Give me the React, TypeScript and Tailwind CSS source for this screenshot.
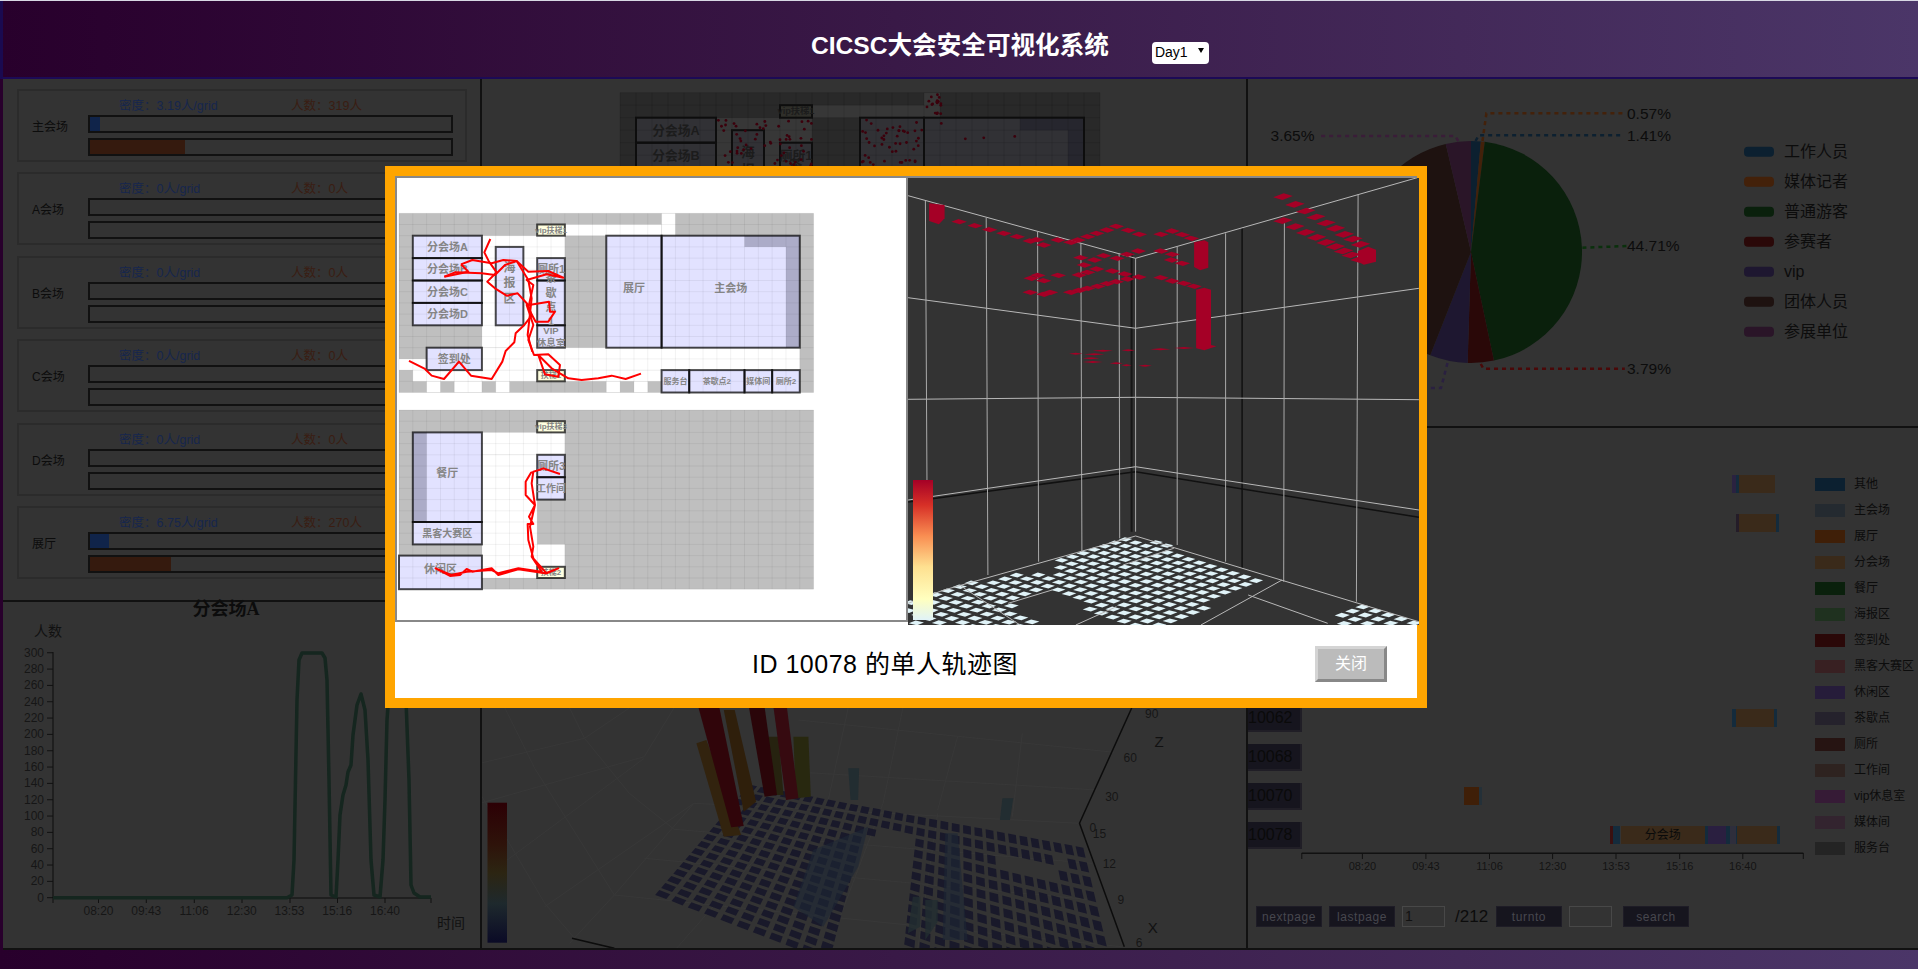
type Pt = [number, number];
type Room = { t: string; c: number[]; fs?: number; dy?: number; kind?: 'lift' };

// zoom crops mapped back onto page pixels, so drawings can be read straight off the picture
const modal3d = (x: number, y: number): Pt => [900 + x / 2.958, 165 + y / 3];
const modalFloor = (x: number, y: number): Pt => [900 + x / 2.958, 440 + y / 3];
const chart3d = (x: number, y: number): Pt => [480 + x / 2.01, 700 + y / 3];
const str = (pts: Pt[]) => pts.map((p) => `${p[0].toFixed(1)},${p[1].toFixed(1)}`).join(' ');
const mapPts = (fn: (x: number, y: number) => Pt, a: number[][]) => str(a.map((p) => fn(p[0], p[1])));

const inPoly = (x: number, y: number, poly: number[][]) => {
  let hit = false;
  for (let i = 0, j = poly.length - 1; i < poly.length; j = i++) {
    const [xi, yi] = poly[i];
    const [xj, yj] = poly[j];
    if (yi > y !== yj > y && x < ((xj - xi) * (y - yi)) / (yj - yi) + xi) hit = !hit;
  }
  return hit;
};

const rooms1: Room[] = [
  { t: '分会场A', c: [1, 2, 6, 4] },
  { t: '分会场B', c: [1, 4, 6, 6] },
  { t: '分会场C', c: [1, 6, 6, 8] },
  { t: '分会场D', c: [1, 8, 6, 10] },
  { t: '海\n报\n区', c: [7, 3, 9, 10], fs: 12, dy: -3 },
  { t: '厕所1', c: [10, 4, 12, 6] },
  { t: '茶\n歇\n点\n1', c: [10, 6, 12, 10], fs: 11, dy: -3 },
  { t: 'VIP\n休息室', c: [10, 10, 12, 12], fs: 9.5 },
  { t: '展厅', c: [15, 2, 19, 12], dy: -4 },
  { t: '主会场', c: [19, 2, 29, 12], dy: -4 },
  { t: '签到处', c: [2, 12, 6, 14] },
  { t: '扶梯1', c: [10, 14, 12, 15], fs: 8, kind: 'lift' },
  { t: 'vip扶梯1', c: [10, 1, 12, 2], fs: 8, kind: 'lift' },
  { t: '服务台', c: [19, 14, 21, 16], fs: 8 },
  { t: '茶歇点2', c: [21, 14, 25, 16], fs: 8 },
  { t: '媒体间', c: [25, 14, 27, 16], fs: 8 },
  { t: '厕所2', c: [27, 14, 29, 16], fs: 8 },
];
const open1 = [
  [19, 0, 20, 2], [12, 1, 19, 2], [6, 2, 12, 12], [6, 12, 29, 14], [0, 13, 2, 14], [1, 14, 19, 15],
  [2, 15, 3, 16], [4, 15, 6, 16], [7, 15, 8, 16], [15, 15, 16, 16], [17, 15, 18, 16],
];
const strips1 = [[25, 2, 29, 3], [28, 2, 29, 12]];

const rooms2: Room[] = [
  { t: '餐厅', c: [1, 2, 6, 10], dy: -4 },
  { t: '黑客大赛区', c: [1, 10, 6, 12], fs: 10 },
  { t: '休闲区', c: [0, 13, 6, 16], dy: -3 },
  { t: 'vip扶梯3', c: [10, 1, 12, 2], fs: 8, kind: 'lift' },
  { t: '厕所3', c: [10, 4, 12, 6] },
  { t: '工作间', c: [10, 6, 12, 8], fs: 10 },
  { t: '扶梯2', c: [10, 14, 12, 15], fs: 8, kind: 'lift' },
];
const open2 = [[6, 2, 12, 4], [6, 4, 10, 15], [10, 12, 12, 14]];
const strips2 = [[1, 2, 2, 10]];

const light = { gray: '#bfbfbf', open: '#ffffff', room: '#e2e2ff', strip: '#acacc8', lift: '#ffffe0', stroke: '#000000', strokeOp: 0.7, text: '#858585', grid: 'rgba(0,0,0,0.055)' };
const dim = { gray: '#292929', open: '#373737', room: '#313135', strip: '#26262e', lift: '#2f2f2a', stroke: '#0d0d0d', strokeOp: 1, text: '#1c1c1c', grid: 'rgba(0,0,0,0.1)' };

function FloorPlan({ x, y, cw, ch, rooms, open, strips, theme }: { x: number; y: number; cw: number; ch: number; rooms: Room[]; open: number[][]; strips: number[][]; theme: typeof light }) {
  const k = cw / 13.82;
  const box = (c: number[]) => ({ x: x + c[0] * cw, y: y + c[1] * ch, width: (c[2] - c[0]) * cw, height: (c[3] - c[1]) * ch });
  return (
    <g>
      <rect x={x} y={y} width={30 * cw} height={16 * ch} fill={theme.gray} />
      {open.map((c, i) => <rect key={i} {...box(c)} fill={theme.open} />)}
      {rooms.map((r) => <rect key={r.t} {...box(r.c)} fill={r.kind === 'lift' ? theme.lift : theme.room} />)}
      {strips.map((c, i) => <rect key={i} {...box(c)} fill={theme.strip} />)}
      {Array.from({ length: 31 }, (_, i) => <line key={i} x1={x + i * cw} x2={x + i * cw} y1={y} y2={y + 16 * ch} stroke={theme.grid} />)}
      {Array.from({ length: 17 }, (_, i) => <line key={i} x1={x} x2={x + 30 * cw} y1={y + i * ch} y2={y + i * ch} stroke={theme.grid} />)}
      {rooms.map((r) => <rect key={r.t} {...box(r.c)} fill="none" stroke={theme.stroke} strokeOpacity={theme.strokeOp} strokeWidth={2} />)}
      {rooms.map((r) => {
        const b = box(r.c);
        const lines = r.t.split('\n');
        const fs = (r.fs ?? 11) * k;
        const lh = lines.length === 2 ? fs * 1.25 : fs * 1.3;
        return lines.map((l, i) => (
          <text key={r.t + i} x={b.x + b.width / 2} y={b.y + b.height / 2 + (r.dy ?? 0) * k + (i - (lines.length - 1) / 2) * lh} fontSize={fs} fontWeight={700} fill={theme.text} textAnchor="middle" dominantBaseline="central">
            {l}
          </text>
        ));
      })}
    </g>
  );
}

// traces are read off the 3x crop of the modal
const trackA = '72,588 120,612 140,632 177,642 222,590 258,632 320,642 352,590 362,558 388,532 392,505 418,480 440,452 430,420 398,385 365,392 330,370 307,350 335,322 312,290 298,262 316,222';
const trackB = '228,298 262,285 320,295 355,285 395,288 430,320 490,318 535,338 485,328 425,345 445,360 432,420 492,410 495,440 510,440 490,470 452,470 425,420 445,480 430,525 447,570 490,568 525,600 520,635 480,628 460,570 500,610 550,640 590,645 640,640 680,632 722,642 768,626';
const trackC = '178,335 210,322 290,325 330,330 360,300 395,288 430,345 440,400 428,510 442,560';
const trackD = '178,335 250,320 228,298';
const trackE = '525,222 475,205 438,218 422,245 422,285 450,315 432,350 445,372 428,372 430,420 445,475 485,520 520,505 480,520 400,508 340,525 320,505 262,515 245,507 225,525 195,528 152,505 198,525 245,515 320,510 340,520 400,505 470,515 440,470 445,440 435,380 450,315 440,250 445,215 470,208';

const redTiles = [
  [175, 170], [222, 182], [265, 194], [307, 205], [347, 215], [385, 228], [405, 224], [425, 240], [467, 225], [505, 232], [527, 225], [555, 215], [582, 205], [612, 195], [640, 184], [675, 196], [708, 208], [772, 208], [805, 198], [835, 209], [862, 220],
  [535, 278], [575, 285], [603, 272], [642, 280], [672, 268], [705, 258], [772, 258], [805, 268], [803, 285], [835, 295],
  [545, 300], [555, 322], [582, 312], [628, 318], [665, 327], [707, 336], [772, 338], [805, 348], [840, 355], [870, 364],
  [408, 331], [388, 340], [425, 347], [468, 331], [530, 330], [385, 382], [425, 388], [445, 382], [505, 382], [530, 376], [555, 370], [585, 364], [612, 356], [640, 350], [672, 342],
];
const redBig = [
  [1133, 95], [1168, 118], [1200, 138], [1230, 156], [1260, 174], [1288, 190], [1314, 208], [1340, 222], [1362, 238],
  [1133, 167], [1168, 185], [1200, 202], [1232, 217], [1260, 232], [1288, 245], [1312, 258], [1335, 270], [1360, 283],
];
const redFlat = [[520, 566, 40], [575, 568, 60], [600, 557, 60], [675, 556, 40], [770, 553, 60], [840, 549, 60], [565, 580, 50], [570, 591, 60], [640, 595, 40], [670, 601, 30], [725, 602, 40]];

const zones7 = [
  [[650, 296], [760, 305], [1070, 420], [790, 560], [640, 560], [450, 440], [480, 345]],
  [[20, 490], [190, 428], [340, 405], [440, 390], [450, 445], [320, 490], [420, 560], [20, 560]],
  [[1350, 486], [1540, 540], [1540, 560], [1265, 560]],
];

function tiles7() {
  const out: string[] = [];
  for (let i = -8; i < 40; i++) {
    for (let j = -4; j < 34; j++) {
      const s = 1 + (i + j) * 0.006;
      const x = 697 + (i - j) * 30 * s;
      const y = 288 + (i * 9.5 + j * 10) * s;
      if (!zones7.some((z) => inPoly(x, y, z))) continue;
      const a = 30 * s * 0.66;
      const b = 9.7 * s * 0.66;
      out.push(mapPts(modalFloor, [[x - a, y + 1], [x - 2, y - b], [x + a, y - 1], [x + 2, y + b]]));
    }
  }
  return out;
}

function Modal3D() {
  const wall = [
    [[24, 92], [697, 280], [1530, 38]],
    [[24, 398], [697, 490], [1535, 370]],
    [[24, 703], [697, 697], [1535, 704]],
  ];
  const verts = [
    [[75, 108], [82, 1340]], [[255, 158], [260, 1230]], [[407, 200], [410, 1190]], [[535, 235], [538, 1160]], [[648, 265], [650, 1120]], [[697, 280], [697, 1100]],
    [[820, 245], [820, 1140]], [[963, 205], [963, 1190]], [[1137, 175], [1135, 1250]], [[1355, 88], [1350, 1310]],
  ];
  const floorLines = [
    [[24, 180], [697, 80], [1535, 210]],
    [[697, 288], [130, 450], [24, 490]],
    [[697, 288], [1535, 545]],
    [[810, 325], [660, 375]], [[450, 450], [320, 490]], [[1130, 420], [890, 555]], [[1030, 465], [1265, 550]], [[180, 438], [355, 555]], [[640, 500], [520, 555]],
  ];
  return (
    <svg viewBox="908 178 511 447" className="relative h-[447px] w-[511px] shrink-0 bg-[#333]">
      <defs>
        <linearGradient id="heat" x1="0" x2="0" y1="0" y2="1">
          <stop offset="0" stopColor="#a50026" />
          <stop offset="0.18" stopColor="#d73027" />
          <stop offset="0.4" stopColor="#f98e52" />
          <stop offset="0.62" stopColor="#fee090" />
          <stop offset="0.85" stopColor="#ffffbf" />
          <stop offset="1" stopColor="#e0f3f8" />
        </linearGradient>
      </defs>
      {tiles7().map((p, i) => <polygon key={i} points={p} fill="#e0f3f8" />)}
      <polyline points={mapPts(modal3d, [[685, 265], [685, 1100]])} stroke="#161616" strokeWidth={2} fill="none" />
      <polyline points={mapPts(modal3d, [[1012, 190], [1012, 1210]])} stroke="#111" strokeWidth={1.5} fill="none" />
      <polyline points={mapPts(modalFloor, [[24, 186], [697, 95], [1535, 232]])} stroke="#111" strokeWidth={1.5} fill="none" />
      {wall.map((a, i) => <polyline key={i} points={mapPts(modal3d, a)} stroke="#b8b8b8" fill="none" />)}
      {verts.map((a, i) => <polyline key={i} points={mapPts(modal3d, a)} stroke="#aaaaaa" fill="none" />)}
      {floorLines.map((a, i) => <polyline key={i} points={mapPts(modalFloor, a)} stroke="#b8b8b8" fill="none" />)}
      {redTiles.map(([x, y], i) => <polygon key={i} points={mapPts(modal3d, [[x - 23, y], [x - 2, y - 8], [x + 23, y], [x + 2, y + 8]])} fill="#a50026" />)}
      {redBig.map(([x, y], i) => <polygon key={i} points={mapPts(modal3d, [[x - 29, y + 2], [x + 2, y - 10], [x + 29, y - 2], [x - 2, y + 10]])} fill="#a50026" />)}
      {redFlat.map(([x, y, w], i) => <polygon key={i} points={mapPts(modal3d, [[x - w / 2, y], [x, y - 3], [x + w / 2, y], [x, y + 3]])} fill="#a50026" />)}
      <polygon points={mapPts(modal3d, [[86, 115], [132, 120], [132, 160], [115, 178], [86, 168]])} fill="#a50026" />
      <polygon points={mapPts(modal3d, [[870, 232], [900, 226], [912, 232], [912, 308], [888, 316], [870, 306]])} fill="#a50026" />
      <polygon points={mapPts(modal3d, [[876, 374], [900, 368], [920, 374], [920, 540], [936, 544], [900, 556], [876, 550]])} fill="#a50026" />
      <polygon points={mapPts(modal3d, [[1355, 258], [1385, 245], [1408, 254], [1408, 290], [1372, 299], [1355, 290]])} fill="#a50026" />
      <rect x={913} y={480} width={20} height={140} fill="url(#heat)" />
    </svg>
  );
}

function TrajectoryPlan() {
  return (
    <svg viewBox="397 178 509 442" className="h-[442px] w-[509px] shrink-0">
      <FloorPlan x={399} y={213.3} cw={13.82} ch={11.2} rooms={rooms1} open={open1} strips={strips1} theme={light} />
      <FloorPlan x={399} y={410} cw={13.82} ch={11.2} rooms={rooms2} open={open2} strips={strips2} theme={light} />
      <g transform="translate(385,165) scale(0.3333)" fill="none" stroke="#ff0000" strokeWidth={6} strokeLinejoin="round">
        <polyline points={trackA} />
        <polyline points={trackB} />
        <polyline points={trackC} />
        <polyline points={trackD} />
      </g>
      <g transform="translate(385,400) scale(0.3333)" fill="none" stroke="#ff0000" strokeWidth={6} strokeLinejoin="round">
        <polyline points={trackE} />
      </g>
    </svg>
  );
}

const venues = [
  { name: '主会场', density: '3.19', count: '319', blue: 9.5, red: 95 },
  { name: 'A会场', density: '0', count: '0', blue: 0, red: 0 },
  { name: 'B会场', density: '0', count: '0', blue: 0, red: 0 },
  { name: 'C会场', density: '0', count: '0', blue: 0, red: 0 },
  { name: 'D会场', density: '0', count: '0', blue: 0, red: 0 },
  { name: '展厅', density: '6.75', count: '270', blue: 19, red: 81 },
];

function VenueCard({ v }: { v: (typeof venues)[number] }) {
  return (
    <div className="flex h-[73px] border-2 border-[#2b2b2b]">
      <div className="w-[69px] pl-[13px] pt-[27px] text-[12px] leading-[18px] text-[#0c0c0c]">{v.name}</div>
      <div className="w-[365px]">
        <div className="flex h-[24px] pl-[31px] pt-[6px] text-[12.5px] leading-[18px]">
          <span className="w-[172px] text-[#16264d]">密度：{v.density}人/grid</span>
          <span className="text-[#3a1d12]">人数：{v.count}人</span>
        </div>
        <div className="h-[18px] border-2 border-[#111]">
          <div className="h-full bg-[#10244a]" style={{ width: v.blue }} />
        </div>
        <div className="mt-[5px] h-[18px] border-2 border-[#111]">
          <div className="h-full bg-[#351a0e]" style={{ width: v.red }} />
        </div>
      </div>
    </div>
  );
}

const timeTicks = ['08:20', '09:43', '11:06', '12:30', '13:53', '15:16', '16:40'];
const linePts = '53,897.7 287,897.7 292,895 294,860 297,700 299,660 302,653 322,653 325,658 327,680 329,780 331,895 336,897 338,860 340,815 343,795 346,785 348,772 351,765 353,735 357,705 361,694 365,710 368,760 371,860 374,895 380,897 383,860 385,800 387,720 390,680 395,650 402,650 406,700 409,780 411,885 414,893 420,897 431,897';

function LineChart() {
  return (
    <svg viewBox="3 602 477 345" className="h-[345px] w-full overflow-visible">
      <text x={226} y={609} textAnchor="middle" dominantBaseline="central" fontSize={18} fontWeight={700} fill="#0c0c0c" className="font-['Liberation_Serif','Noto_Sans_CJK_SC',serif]">分会场A</text>
      <text x={48} y={631} textAnchor="middle" dominantBaseline="central" fontSize={14} fill="#111">人数</text>
      <text x={451} y={923} textAnchor="middle" dominantBaseline="central" fontSize={14} fill="#111">时间</text>
      <polyline points="53,652 53,898 431,898" fill="none" stroke="#0c0c0c" strokeWidth={1} />
      {Array.from({ length: 16 }, (_, i) => {
        const y = 897.7 - i * 16.33;
        return (
          <g key={i}>
            <line x1={47} x2={53} y1={y} y2={y} stroke="#111" />
            <text x={44} y={y} textAnchor="end" dominantBaseline="central" fontSize={12} fill="#161616">{i * 20}</text>
          </g>
        );
      })}
      {[53, 98.5, 146.3, 194.3, 242, 290, 337.5, 385, 431].map((x) => <line key={x} x1={x} x2={x} y1={898} y2={903} stroke="#111" />)}
      {timeTicks.map((t, i) => <text key={t} x={98.5 + i * 47.75} y={911} textAnchor="middle" dominantBaseline="central" fontSize={12} fill="#161616">{t}</text>)}
      <polyline points={linePts} fill="none" stroke="#15261f" strokeWidth={3.5} strokeLinejoin="round" />
    </svg>
  );
}

function dots() {
  let seed = 7;
  const rnd = () => (seed = (seed * 16807) % 2147483647) / 2147483647;
  const groups = [[927, 942, 94, 108, 14], [934, 942, 108, 125, 5], [862, 922, 120, 166, 48], [718, 812, 120, 166, 60], [944, 1035, 125, 140, 3]];
  const out: Pt[] = [];
  groups.forEach(([x0, x1, y0, y1, n]) => {
    for (let i = 0; i < n; i++) out.push([x0 + rnd() * (x1 - x0), y0 + rnd() * (y1 - y0)]);
  });
  return out;
}

const holes = [
  [[790, 380], [885, 400], [850, 760], [725, 760]],
  [[1050, 480], [1170, 480], [1215, 525], [1060, 520]],
];

function floorTiles() {
  const A: Pt = [540, 250];
  const B: Pt = [1215, 437];
  const D: Pt = [345, 585];
  const C: Pt = [1330, 1150];
  const nu = 30;
  const nv = 16;
  const at = (u: number, v: number): Pt => {
    const a = (1 - u) * (1 - v);
    const b = u * (1 - v);
    const c = u * v;
    const d = (1 - u) * v;
    return [A[0] * a + B[0] * b + C[0] * c + D[0] * d, A[1] * a + B[1] * b + C[1] * c + D[1] * d];
  };
  const out: string[] = [];
  for (let i = 0; i < nu; i++) {
    for (let j = 0; j < nv; j++) {
      const c = at((i + 0.5) / nu, (j + 0.5) / nv);
      if (holes.some((h) => inPoly(c[0], c[1], h))) continue;
      if (c[0] > 1290 || c[1] > 800) continue;
      const u0 = (i + 0.16) / nu;
      const u1 = (i + 0.84) / nu;
      const v0 = (j + 0.16) / nv;
      const v1 = (j + 0.84) / nv;
      out.push(mapPts(chart3d, [at(u0, v0), at(u1, v0), at(u1, v1), at(u0, v1)]));
    }
  }
  return out;
}

const faint = [
  [[0, 190], [210, 115], [300, 24]], [[0, 310], [330, 170], [390, 24]], [[50, 485], [330, 175]], [[130, 620], [430, 310]], [[180, 730], [270, 585], [430, 310]],
  [[180, 24], [210, 115], [300, 280], [390, 388]], [[50, 24], [110, 205], [270, 585]], [[0, 280], [130, 610], [190, 715]],
  [[640, 60], [1275, 157]], [[570, 210], [1240, 270]], [[430, 310], [1205, 370]], [[740, 24], [700, 300]], [[850, 24], [810, 310]], [[960, 110], [920, 330]], [[1090, 100], [1070, 350]],
  [[270, 585], [1290, 740]], [[330, 475], [1235, 600]], [[390, 388], [1230, 490]], [[880, 745], [920, 340]], [[700, 745], [810, 310]], [[395, 745], [640, 330]],
];

function BackChart() {
  return (
    <svg viewBox="482 429 764 519" className="h-[519px] w-full">
      <defs>
        <linearGradient id="heatDim" x1="0" x2="0" y1="0" y2="1">
          <stop offset="0" stopColor="#2c0005" />
          <stop offset="0.3" stopColor="#2e130a" />
          <stop offset="0.5" stopColor="#2c2512" />
          <stop offset="0.72" stopColor="#1e292d" />
          <stop offset="1" stopColor="#0a0a26" />
        </linearGradient>
      </defs>
      {faint.map((l, i) => <polyline key={i} points={mapPts(chart3d, l)} fill="none" stroke="#383838" />)}
      {floorTiles().map((p, i) => <polygon key={i} points={p} fill="#19192a" />)}
      <polygon points={mapPts(chart3d, [[870, 590], [885, 590], [885, 680], [860, 700]])} fill="#222d31" fillOpacity={0.8} />
      <polygon points={mapPts(chart3d, [[895, 600], [920, 600], [920, 665], [895, 720]])} fill="#222d31" fillOpacity={0.8} />
      <polygon points={mapPts(chart3d, [[670, 450], [780, 380], [760, 500], [690, 680], [630, 620]])} fill="#1c2735" fillOpacity={0.6} />
      <polygon points={mapPts(chart3d, [[935, 400], [960, 400], [980, 720], [930, 720]])} fill="#1c2735" fillOpacity={0.6} />
      <polygon points={mapPts(chart3d, [[1050, 295], [1072, 295], [1065, 360], [1045, 360]])} fill="#222d31" />
      <polygon points={mapPts(chart3d, [[740, 205], [762, 205], [760, 300], [745, 300]])} fill="#222d31" />
      <polygon points={mapPts(chart3d, [[435, 130], [455, 120], [525, 405], [490, 410]])} fill="#32230e" />
      <polygon points={mapPts(chart3d, [[490, 30], [512, 30], [555, 305], [530, 335]])} fill="#2f1f0b" />
      <polygon points={mapPts(chart3d, [[630, 110], [660, 110], [665, 290], [635, 295]])} fill="#28280f" />
      <polygon points={mapPts(chart3d, [[580, 110], [600, 110], [610, 285], [590, 285]])} fill="#26220f" />
      <polygon points={mapPts(chart3d, [[435, 0], [478, 0], [530, 378], [505, 382]])} fill="#30050a" />
      <polygon points={mapPts(chart3d, [[538, 0], [570, 0], [597, 285], [572, 290]])} fill="#2a0509" />
      <polygon points={mapPts(chart3d, [[588, 0], [615, 0], [640, 295], [615, 300]])} fill="#360a10" />
      <polyline points={mapPts(chart3d, [[1310, 24], [1205, 370], [1295, 740]])} fill="none" stroke="#0c0c0c" strokeWidth={1.5} />
      <polyline points={mapPts(chart3d, [[185, 715], [270, 745]])} fill="none" stroke="#0c0c0c" strokeWidth={1.5} />
      {[[1350, 42, '90'], [1307, 175, '60'], [1270, 290, '30'], [1232, 385, '0'], [1245, 403, '15'], [1265, 492, '12'], [1288, 600, '9'], [1325, 728, '6']].map(([x, y, t]) => {
        const [px, py] = chart3d(x as number, y as number);
        return <text key={t as string} x={px} y={py} fontSize={12} textAnchor="middle" dominantBaseline="central" fill="#161616">{t}</text>;
      })}
      <text x={chart3d(1365, 125)[0]} y={chart3d(1365, 125)[1]} fontSize={15} textAnchor="middle" dominantBaseline="central" fill="#111">Z</text>
      <text x={chart3d(1352, 682)[0]} y={chart3d(1352, 682)[1]} fontSize={15} textAnchor="middle" dominantBaseline="central" fill="#111">X</text>
      <rect x={487.5} y={802.7} width={19.5} height={140} fill="url(#heatDim)" />
    </svg>
  );
}

const pieData = [
  { name: '工作人员', pct: 1.41, color: '#0c2030' },
  { name: '媒体记者', pct: 0.57, color: '#43210a' },
  { name: '普通游客', pct: 44.71, color: '#0a200c' },
  { name: '参赛者', pct: 3.79, color: '#2a0808' },
  { name: 'vip', pct: 5.5, color: '#1e1730' },
  { name: '团体人员', pct: 40.37, color: '#1e1210' },
  { name: '参展单位', pct: 3.65, color: '#2a1528' },
];

function PieChart() {
  const cx = 1471;
  const cy = 252;
  const r = 111;
  let acc = 0;
  const leaders = [
    { pts: '1482.5,141 1486.4,113.3 1622.6,113.3', color: '#43210a' },
    { pts: '1475.6,141 1478.6,135.3 1624,135.3', color: '#0c2030' },
    { pts: '1582.4,247.7 1627,246', color: '#0a300c' },
    { pts: '1480.8,364 1483.4,368.7 1624.8,368.7', color: '#4a0808' },
    { pts: '1458.3,141 1455.3,136 1320,136', color: '#3a1d38' },
    { pts: '1447.5,363 1441,388 1340,388', color: '#2a2040' },
  ];
  const labels: [number, number, string, 'start' | 'end'][] = [
    [1627, 113, '0.57%', 'start'], [1627, 135.5, '1.41%', 'start'], [1627, 245.5, '44.71%', 'start'], [1627, 368, '3.79%', 'start'], [1314.5, 135.5, '3.65%', 'end'],
  ];
  return (
    <svg viewBox="1248 79 670 347" className="h-[347px] w-full">
      {pieData.map((s) => {
        const a0 = (acc / 100) * Math.PI * 2;
        acc += s.pct;
        const a1 = (acc / 100) * Math.PI * 2;
        const big = a1 - a0 > Math.PI ? 1 : 0;
        const d = `M${cx} ${cy} L${cx + r * Math.sin(a0)} ${cy - r * Math.cos(a0)} A${r} ${r} 0 ${big} 1 ${cx + r * Math.sin(a1)} ${cy - r * Math.cos(a1)} Z`;
        return <path key={s.name} d={d} fill={s.color} />;
      })}
      {leaders.map((l, i) => <polyline key={i} points={l.pts} fill="none" stroke={l.color} strokeWidth={2.5} strokeDasharray="4 4" />)}
      {labels.map(([x, y, t, anchor]) => <text key={t} x={x} y={y} fontSize={15.5} textAnchor={anchor} dominantBaseline="central" fill="#0c0c0c">{t}</text>)}
      {pieData.map((s, i) => (
        <g key={s.name}>
          <rect x={1744} y={146.7 + i * 30} width={30} height={10} rx={4} fill={s.color} />
          <text x={1784} y={151.7 + i * 30} fontSize={16} dominantBaseline="central" fill="#0c0c0c">{s.name}</text>
        </g>
      ))}
    </svg>
  );
}

type Seg = [number, number, string, string?];
const navy = '#142b3c';
const brown = '#3a2a1a';
const ganttRows: { id: string; segs: Seg[] }[] = [
  { id: '10002', segs: [] },
  { id: '10011', segs: [[1731.6, 1736.3, '#2a2240'], [1736.3, 1739.4, navy], [1739.4, 1774.8, brown]] },
  { id: '10016', segs: [[1736, 1739.4, '#241c28'], [1739.4, 1776, brown], [1776, 1778.7, navy]] },
  { id: '10023', segs: [] },
  { id: '10031', segs: [] },
  { id: '10044', segs: [] },
  { id: '10057', segs: [] },
  { id: '10062', segs: [[1732.4, 1736, navy], [1736, 1774, brown], [1774, 1777, navy]] },
  { id: '10068', segs: [] },
  { id: '10070', segs: [[1464, 1479, '#3f1f08'], [1479, 1482, '#243038']] },
  {
    id: '10078',
    segs: [
      [1610, 1612.7, '#3a1010'], [1612.7, 1620.5, navy], [1620.5, 1704.8, brown, '分会场'], [1704.8, 1707.9, navy], [1707.9, 1726.4, '#2a1f40'],
      [1726.4, 1729.8, navy], [1729.8, 1736, '#2e2e3c'], [1736, 1737, navy], [1737, 1777, brown], [1777, 1779.6, navy],
    ],
  },
];

const areaLegend: [string, string][] = [
  ['其他', '#0c2030'], ['主会场', '#242a30'], ['展厅', '#3f1f08'], ['分会场', '#3a2a1a'], ['餐厅', '#0a200c'], ['海报区', '#1f311f'], ['签到处', '#2a0808'], ['黑客大赛区', '#382022'],
  ['休闲区', '#261c3a'], ['茶歇点', '#25222c'], ['厕所', '#261412'], ['工作间', '#2e2320'], ['vip休息室', '#361b36'], ['媒体间', '#33242f'], ['服务台', '#242424'],
];

function PagerButton({ label, className }: { label: string; className: string }) {
  return (
    <button className={`h-[21px] w-[66px] border border-[#1e1c26] bg-[#16151e] text-[12px] tracking-[0.6px] text-[#47474e] ${className}`}>{label}</button>
  );
}

function Gantt() {
  const ticks = [1301.8, 1362.4, 1425.9, 1489.5, 1552.6, 1616, 1679.7, 1742.8, 1803.3];
  return (
    <div className="flex flex-1">
      <div className="w-[567px] pt-[4px]">
        <div className="flex flex-col gap-[12px]">
          {ganttRows.map((r) => (
            <div key={r.id} className="relative h-[27px]">
              <button className="h-[27px] w-[54px] overflow-hidden border-b-2 border-r-2 border-[#201e26] bg-[#16151e] text-left text-[16px] text-[#0a0a0a]">{r.id}</button>
              {r.segs.map((s, i) => (
                <div key={i} className="absolute top-[4px] h-[18px] text-center text-[12px] leading-[18px] text-[#0a0a0a]" style={{ left: s[0] - 1248, width: s[1] - s[0], background: s[2] }}>
                  {s[3]}
                </div>
              ))}
            </div>
          ))}
        </div>
        <svg viewBox="1248 848 567 30" className="h-[30px] w-[567px]">
          <line x1={1301.8} x2={1803.3} y1={852.3} y2={852.3} stroke="#111" strokeWidth={1.5} />
          {ticks.map((x) => <line key={x} x1={x} x2={x} y1={852} y2={858} stroke="#111" />)}
          {timeTicks.map((t, i) => <text key={t} x={ticks[i + 1]} y={865} fontSize={11} textAnchor="middle" dominantBaseline="central" fill="#141414">{t}</text>)}
        </svg>
        <div className="mt-[27px] flex items-center pl-[8px]">
          <PagerButton label="nextpage" className="" />
          <PagerButton label="lastpage" className="ml-[7px]" />
          <input readOnly value="1" className="ml-[7px] h-[21px] w-[43px] border border-[#484848] bg-transparent pl-[2px] text-[14px] text-[#111] outline-none" />
          <span className="ml-[10px] w-[34px] text-[17px] leading-[21px] text-[#0c0c0c]">/212</span>
          <PagerButton label="turnto" className="ml-[7px]" />
          <input readOnly className="ml-[7px] h-[21px] w-[43px] border border-[#484848] bg-transparent outline-none" />
          <PagerButton label="search" className="ml-[11px]" />
        </div>
      </div>
      <div className="flex flex-col pt-[43px]">
        {areaLegend.map(([name, color]) => (
          <div key={name} className="flex h-[26px] items-center gap-[9px] whitespace-nowrap text-[12px] text-[#0c0c0c]">
            <span className="h-[13px] w-[30px]" style={{ background: color }} />
            {name}
          </div>
        ))}
      </div>
    </div>
  );
}

export default function App() {
  const bgDots = dots();
  return (
    <div className="relative flex h-[969px] w-[1918px] flex-col overflow-hidden border-t border-[#d8d8e4] bg-gradient-to-r from-[#28002c] to-[#4b3668] font-['Liberation_Sans','Noto_Sans_CJK_SC',sans-serif]">
      {/* Header */}
      <header className="flex h-[78px] shrink-0 items-center border-b-2 border-l-[3px] border-b-[#1c0a55] border-l-[#1a0a50] pl-[808px] pt-[14px]">
        <h1 className="text-[24.6px] font-bold leading-[34px] text-white">CICSC大会安全可视化系统</h1>
        <div className="relative ml-[43px] mt-[10px] h-[22px] w-[57px]">
          <select className="h-full w-full appearance-none rounded-[4px] bg-white pl-[3px] text-[14px] text-black">
            <option>Day1</option>
            <option>Day2</option>
          </select>
          <svg viewBox="0 0 6 5" className="absolute right-[5px] top-[8px] h-[5px] w-[6px]">
            <path d="M0 0h6L3 5z" fill="#000" />
          </svg>
        </div>
      </header>

      <main className="ml-[3px] flex h-[871px] shrink-0 border-b-2 border-[#111] bg-[#333]">
        {/* Left column */}
        <section className="flex w-[479px] shrink-0 flex-col border-r-2 border-[#111]">
          <div className="flex h-[523px] flex-col gap-[10.4px] border-b-2 border-[#111] pl-[14px] pr-[13px] pt-[10px]">
            {venues.map((v) => <VenueCard key={v.name} v={v} />)}
          </div>
          <LineChart />
        </section>

        {/* Center column */}
        <section className="flex w-[766px] shrink-0 flex-col border-r-2 border-[#111]">
          <svg viewBox="482 79 764 350" className="h-[350px] w-full">
            <FloorPlan x={620} y={92.7} cw={16} ch={12.5} rooms={rooms1} open={open1} strips={strips1} theme={dim} />
            {bgDots.map(([x, y], i) => <circle key={i} cx={x} cy={y} r={1.4} fill="#3c000c" />)}
          </svg>
          <BackChart />
        </section>

        {/* Right column */}
        <section className="flex flex-1 flex-col">
          <div className="border-b-2 border-[#111]">
            <PieChart />
          </div>
          <Gantt />
        </section>
      </main>

      <footer className="flex-1" />

      {/* Trajectory dialog */}
      <div className="absolute left-[385px] top-[165px] h-[542px] w-[1042px] border-[10px] border-[#ffa500] bg-white">
        <div className="flex h-[446px] border-2 border-[#888]">
          <TrajectoryPlan />
          <div className="h-full w-[2px] shrink-0 bg-[#888]" />
          <Modal3D />
        </div>
        <div className="flex h-[76px] items-center pr-[30px] pt-[8px]">
          <span className="ml-[357px] mt-[2px] text-[25px] tracking-[0.5px] text-black">ID 10078 的单人轨迹图</span>
          <button className="ml-auto h-[36px] w-[72px] border-[3px] border-b-[#888] border-l-[#d4d4d4] border-r-[#888] border-t-[#d4d4d4] bg-[#bbb] text-[16px] text-white">关闭</button>
        </div>
      </div>
    </div>
  );
}
